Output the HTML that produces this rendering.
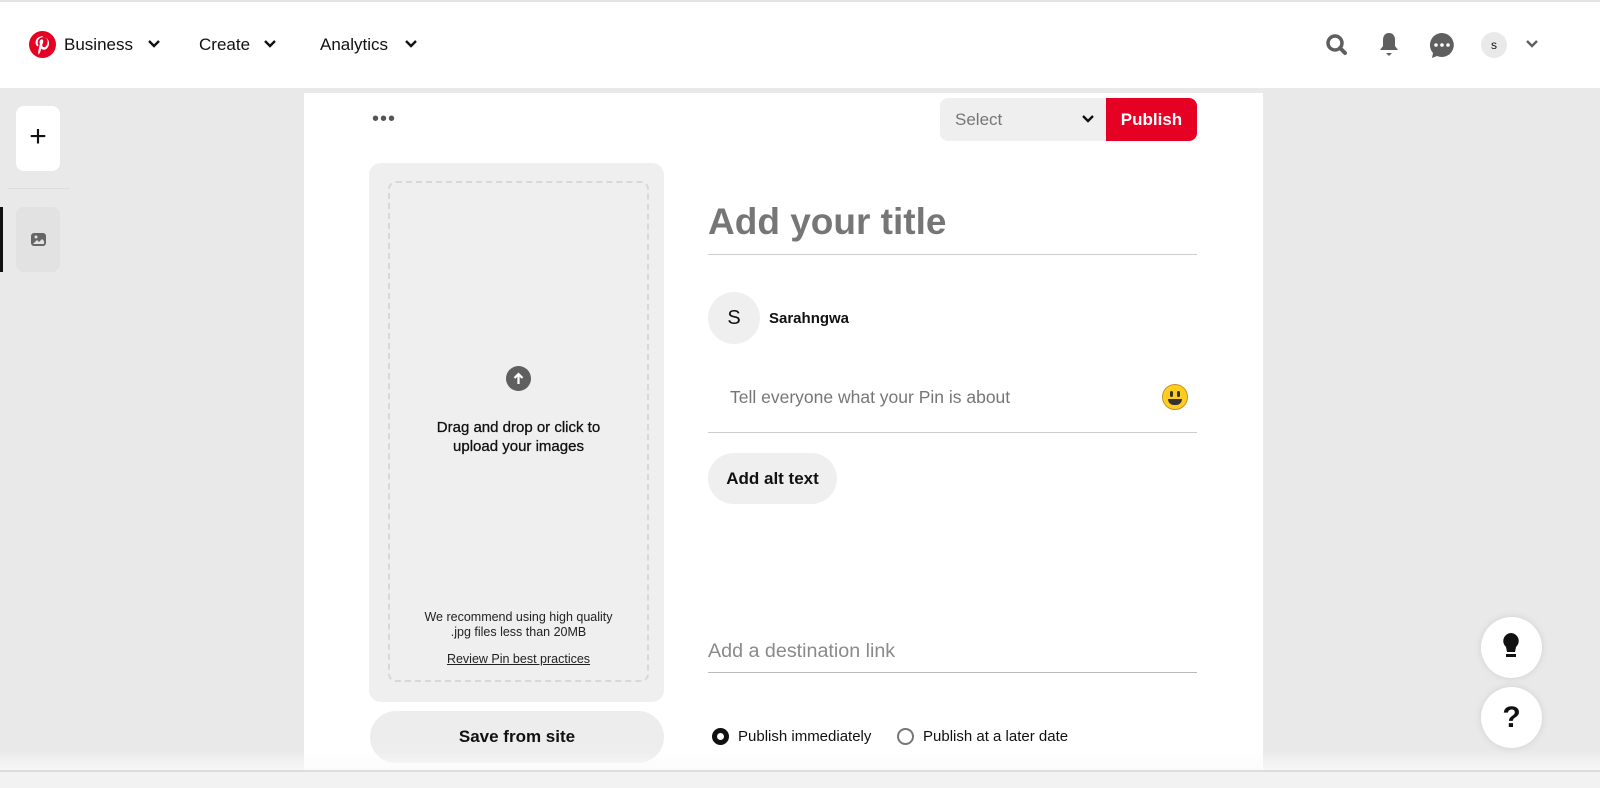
<!DOCTYPE html>
<html><head><style>
*{margin:0;padding:0;box-sizing:border-box}
body{width:1600px;height:788px;overflow:hidden;background:#e9e9e9;font-family:"Liberation Sans",sans-serif;position:relative;color:#111}
.a{position:absolute}
</style></head><body>
<div class="a" style="left:0;top:0;width:1600px;height:88px;background:#fff;border-top:2px solid #e4e4e4"></div>
<svg class="a" style="left:29px;top:31px" width="27" height="27" viewBox="0 0 24 24"><circle cx="12" cy="12" r="12" fill="#e60023"/><path d="M12.3 4.5c-4.3 0-6.5 3-6.5 5.6 0 1.6.6 3 1.9 3.5.2.1.4 0 .5-.2l.2-.8c.1-.2 0-.3-.1-.5-.4-.5-.6-1.1-.6-1.9 0-2.5 1.8-4.7 4.8-4.7 2.6 0 4 1.6 4 3.7 0 2.8-1.2 5.1-3.1 5.1-1 0-1.8-.9-1.6-1.9.3-1.2.9-2.6.9-3.5 0-.8-.4-1.5-1.4-1.5-1.1 0-1.9 1.1-1.9 2.6 0 1 .3 1.6.3 1.6l-1.3 5.5c-.4 1.6 0 3.6 0 3.8 0 .1.2.1.2 0 .1-.1 1.2-1.5 1.6-2.9l.6-2.4c.3.6 1.2 1.1 2.2 1.1 2.9 0 4.8-2.6 4.8-6.1 0-2.7-2.3-5.2-5.7-5.2z" fill="#fff"/></svg>
<div class="a" style="left:64px;top:35px;font-size:17px">Business</div>
<div class="a" style="left:199px;top:35px;font-size:17px">Create</div>
<div class="a" style="left:320px;top:35px;font-size:17px">Analytics</div>
<svg class="a" style="left:147px;top:39px" width="14" height="10"><path d="M2 2l5 5 5-5" stroke="#111" stroke-width="2.4" fill="none"/></svg>
<svg class="a" style="left:263px;top:39px" width="14" height="10"><path d="M2 2l5 5 5-5" stroke="#111" stroke-width="2.4" fill="none"/></svg>
<svg class="a" style="left:404px;top:39px" width="14" height="10"><path d="M2 2l5 5 5-5" stroke="#111" stroke-width="2.4" fill="none"/></svg>
<svg class="a" style="left:1325px;top:32px" width="24" height="26"><circle cx="10" cy="11" r="7" stroke="#5f5f5f" stroke-width="3.5" fill="none"/><path d="M15 16l5 5" stroke="#5f5f5f" stroke-width="4" stroke-linecap="round"/></svg>
<svg class="a" style="left:1376px;top:31px" width="26" height="28"><path d="M13 2c-4 0-6 3-6 7v6l-3 4h18l-3-4V9c0-4-2-7-6-7z" fill="#5f5f5f"/><path d="M10 22h6l-3 3z" fill="#5f5f5f"/></svg>
<svg class="a" style="left:1428px;top:31px" width="28" height="28"><path d="M14 2a12 12 0 1 1-5 23l-5 2 1-5A12 12 0 0 1 14 2z" fill="#5f5f5f"/><circle cx="8" cy="14" r="1.8" fill="#fff"/><circle cx="14" cy="14" r="1.8" fill="#fff"/><circle cx="20" cy="14" r="1.8" fill="#fff"/></svg>
<div class="a" style="left:1481px;top:32px;width:26px;height:26px;border-radius:50%;background:#e9e9e9;font-size:12px;text-align:center;line-height:26px">s</div>
<svg class="a" style="left:1525px;top:39px" width="14" height="10"><path d="M2 2l5 5 5-5" stroke="#5f5f5f" stroke-width="2.4" fill="none"/></svg>

<div class="a" style="left:16px;top:106px;width:44px;height:65px;background:#fff;border-radius:8px;text-align:center;line-height:62px;font-size:30px">+</div>
<div class="a" style="left:8px;top:188px;width:62px;height:1px;background:#ddd"></div>
<div class="a" style="left:0;top:207px;width:3px;height:65px;background:#111"></div>
<div class="a" style="left:16px;top:207px;width:44px;height:65px;background:#e2e2e2;border-radius:8px"></div>
<svg class="a" style="left:30px;top:232px" width="17" height="16"><rect x="1" y="1" width="15" height="13" rx="3" fill="#666"/><circle cx="6" cy="5" r="1.5" fill="#e2e2e2"/><path d="M3 12l4-4 2 2 3-3 2 2v3z" fill="#e2e2e2"/></svg>

<div class="a" style="left:304px;top:93px;width:959px;height:679px;background:#fff"></div>
<div class="a" style="left:372px;top:108px;font-size:20px;color:#555;letter-spacing:1px">•••</div>
<div class="a" style="left:940px;top:98px;width:166px;height:43px;background:#efefef;border-radius:8px 0 0 8px;font-size:17px;color:#767676;padding:12px 0 0 15px">Select</div>
<svg class="a" style="left:1081px;top:114px" width="14" height="10"><path d="M2 2l5 5 5-5" stroke="#111" stroke-width="2.4" fill="none"/></svg>
<div class="a" style="left:1106px;top:98px;width:91px;height:43px;background:#e60023;border-radius:0 8px 8px 0;color:#fff;font-weight:bold;font-size:17px;text-align:center;line-height:43px">Publish</div>

<div class="a" style="left:369px;top:163px;width:295px;height:539px;background:#efefef;border-radius:12px"></div>
<div class="a" style="left:388px;top:181px;width:261px;height:501px;border:2px dashed #d8d8d8;border-radius:8px"></div>
<div class="a" style="left:506px;top:366px;width:25px;height:25px;border-radius:50%;background:#5f5f5f"></div>
<svg class="a" style="left:506px;top:366px" width="25" height="25"><path d="M12.5 18V8M8.5 12l4-4 4 4" stroke="#fff" stroke-width="2.2" fill="none"/></svg>
<div class="a" style="left:388px;top:418px;width:261px;text-align:center;font-size:15px;line-height:19px;-webkit-text-stroke:0.3px #111">Drag and drop or click to<br>upload your images</div>
<div class="a" style="left:388px;top:610px;width:261px;text-align:center;font-size:12.5px;line-height:15px;color:#222">We recommend using high quality<br>.jpg files less than 20MB</div>
<div class="a" style="left:388px;top:652px;width:261px;text-align:center;font-size:12.5px;color:#222;text-decoration:underline">Review Pin best practices</div>
<div class="a" style="left:370px;top:711px;width:294px;height:52px;background:#ededed;border-radius:26px;text-align:center;line-height:52px;font-weight:bold;font-size:17px">Save from site</div>

<div class="a" style="left:708px;top:201px;font-size:37px;font-weight:bold;color:#767676">Add your title</div>
<div class="a" style="left:708px;top:254px;width:489px;height:1px;background:#cdcdcd"></div>
<div class="a" style="left:708px;top:292px;width:52px;height:52px;border-radius:50%;background:#efefef;text-align:center;line-height:52px;font-size:20px">S</div>
<div class="a" style="left:769px;top:310px;font-size:15px;font-weight:bold">Sarahngwa</div>
<div class="a" style="left:730px;top:387px;font-size:17.5px;color:#767676">Tell everyone what your Pin is about</div>
<div class="a" style="left:1162px;top:384px;width:26px;height:26px;border-radius:50%;background:#ffcc22;border:1px solid #c9931a"></div>
<div class="a" style="left:1170px;top:391px;width:3px;height:6px;background:#333;border-radius:2px"></div>
<div class="a" style="left:1177px;top:391px;width:3px;height:6px;background:#333;border-radius:2px"></div>
<div class="a" style="left:1168px;top:399px;width:14px;height:6px;background:#333;border-radius:0 0 7px 7px"></div>
<div class="a" style="left:708px;top:432px;width:489px;height:1px;background:#cdcdcd"></div>
<div class="a" style="left:708px;top:453px;width:129px;height:51px;border-radius:26px;background:#efefef;text-align:center;line-height:51px;font-size:17px;font-weight:bold">Add alt text</div>
<div class="a" style="left:708px;top:640px;font-size:19.7px;color:#8a8a8a">Add a destination link</div>
<div class="a" style="left:708px;top:672px;width:489px;height:1px;background:#bbb"></div>
<div class="a" style="left:712px;top:728px;width:17px;height:17px;border-radius:50%;border:5px solid #111;background:#fff"></div>
<div class="a" style="left:738px;top:728px;font-size:15px">Publish immediately</div>
<div class="a" style="left:897px;top:728px;width:17px;height:17px;border-radius:50%;border:2px solid #767676"></div>
<div class="a" style="left:923px;top:728px;font-size:15px">Publish at a later date</div>

<div class="a" style="left:0;top:750px;width:1600px;height:20px;background:linear-gradient(rgba(255,255,255,0),rgba(250,250,250,.8))"></div>
<div class="a" style="left:0;top:770px;width:1600px;height:2px;background:#dcdcdc"></div>
<div class="a" style="left:0;top:772px;width:1600px;height:16px;background:#f2f2f2"></div>

<div class="a" style="left:1481px;top:617px;width:61px;height:61px;border-radius:50%;background:#fff;box-shadow:0 0 8px rgba(0,0,0,.1)"></div>
<svg class="a" style="left:1500px;top:632px" width="22" height="32"><path d="M11 1a8 8 0 0 0-5 14l1 5h8l1-5A8 8 0 0 0 11 1z" fill="#111"/><rect x="6" y="22" width="10" height="3" fill="#111"/></svg>
<div class="a" style="left:1481px;top:687px;width:61px;height:61px;border-radius:50%;background:#fff;box-shadow:0 0 8px rgba(0,0,0,.1);text-align:center;line-height:61px;font-size:30px;font-weight:bold">?</div>
</body></html>
